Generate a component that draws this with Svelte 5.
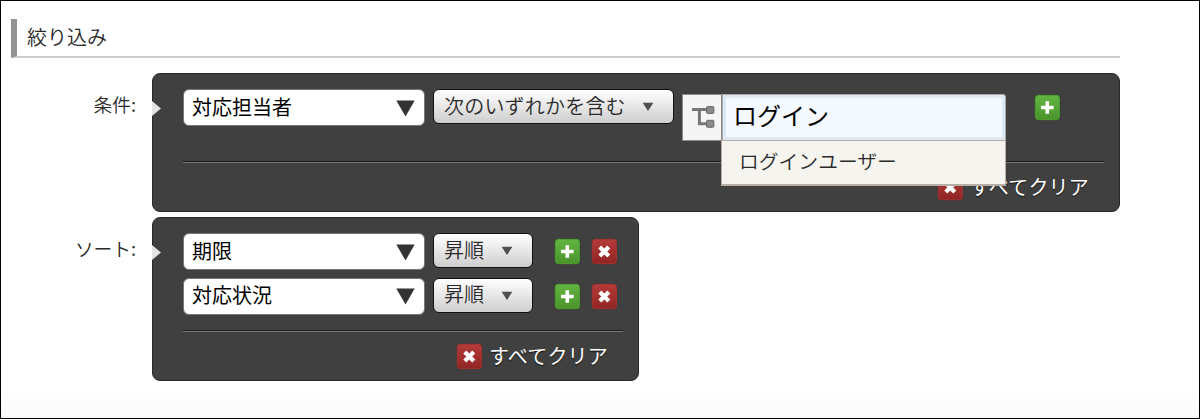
<script>
  const sorts = ['期限', '対応状況'];
</script>

{#snippet plus()}
  <svg class="icon" width="27" height="27" viewBox="0 0 27 27">
    <rect x=".5" y=".5" width="26" height="26" rx="4" fill="#383838" />
    <rect x="1.3" y="1.3" width="24.2" height="24.4" rx="3" fill="url(#green)" stroke="#4fa82f" stroke-width=".8" />
    <path d="M13.3 7.2v12.6M7 13.5h12.6" stroke="#fff" stroke-width="3.6" />
  </svg>
{/snippet}

{#snippet cross()}
  <svg class="icon" width="27" height="27" viewBox="0 0 27 27">
    <rect x=".5" y=".5" width="26" height="26" rx="4" fill="#383838" />
    <rect x="1.3" y="1.3" width="24.2" height="24.4" rx="3" fill="url(#red)" stroke="#b03431" stroke-width=".8" />
    <path d="M8.8 9l9 9M17.8 9l-9 9" stroke="#fff" stroke-width="4.2" />
  </svg>
{/snippet}

{#snippet field(text)}
  <div class="field">
    <span>{text}</span>
    <svg width="19" height="17" viewBox="0 0 19 17"><path d="M.3.6h18.4L9.5 16.4z" fill="#333" /></svg>
  </div>
{/snippet}

{#snippet operator(text, wide)}
  <div class="operator" class:wide>
    <span>{text}</span>
    <svg width="12" height="10" viewBox="0 0 12 10"><path d="M.6.8h10.8L6 9z" fill="#505050" /></svg>
  </div>
{/snippet}

{#snippet clear()}
  <div class="clear">{@render cross()}<span>すべてクリア</span></div>
{/snippet}

<svg class="defs" width="0" height="0">
  <linearGradient id="green" x2="0" y2="1"><stop stop-color="#62b440" /><stop offset="1" stop-color="#4b942d" /></linearGradient>
  <linearGradient id="red" x2="0" y2="1"><stop stop-color="#b53b38" /><stop offset="1" stop-color="#8f2523" /></linearGradient>
</svg>

<main>
  <h2>絞り込み</h2>

  <section>
    <div class="label">条件:</div>
    <div class="panel conditions">
      <div class="row">
        {@render field('対応担当者')}
        {@render operator('次のいずれかを含む', true)}
        <div class="picker">
          <div class="tree">
            <svg width="24" height="24" viewBox="0 0 24 24">
              <path d="M1 4.6h16M8.4 4.6v14.2h8" fill="none" stroke="#777" stroke-width="3" />
              <rect x="15.5" y="1.5" width="7.4" height="7" rx="1.2" fill="#8a8a8a" stroke="#686868" />
              <rect x="15.5" y="15.3" width="7.4" height="7" rx="1.2" fill="#8a8a8a" stroke="#686868" />
            </svg>
          </div>
          <div class="input">ログイン</div>
          <div class="menu">ログインユーザー</div>
        </div>
        <div class="add">{@render plus()}</div>
      </div>
      <hr />
      {@render clear()}
    </div>
  </section>

  <section>
    <div class="label">ソート:</div>
    <div class="panel sorting">
      {#each sorts as name}
        <div class="row">
          {@render field(name)}
          {@render operator('昇順', false)}
          <div class="actions">{@render plus()}{@render cross()}</div>
        </div>
      {/each}
      <hr />
      {@render clear()}
    </div>
  </section>
</main>

<style>
  :global(body) { margin: 0; }
  * { box-sizing: border-box; }
  svg { display: block; flex: none; }
  .defs { position: absolute; }
  main {
    width: 1200px;
    height: 419px;
    padding: 18px 79px 0 10px;
    border: 1px solid #000;
    background: linear-gradient(#fff 390px, #fafafa);
    font: 20px/28px "Noto Sans CJK JP", sans-serif;
    color: #2a2a2a;
    overflow: hidden;
    white-space: nowrap;
  }
  h2 {
    height: 39px;
    width: 1109px;
    margin: 0 0 15px;
    padding: 4px 0 0 10px;
    border-left: 6px solid #949494;
    border-bottom: 2px solid #d0cbc8;
    font-size: 20px;
    font-weight: 350;
    line-height: 28px;
  }
  section { display: flex; margin-bottom: 5px; }
  .label {
    width: 141px;
    padding: 17px 16px 0 0;
    text-align: right;
    font-weight: 350;
    font-size: 18.7px;
  }
  .panel {
    position: relative;
    border: 1px solid #292929;
    border-radius: 8px;
    background: #404040;
    padding: 15px 15px 0 30px;
  }
  .panel::before {
    content: "";
    position: absolute;
    left: -1px;
    top: 27px;
    width: 9px;
    height: 15px;
    background: #e4e4e4;
    clip-path: polygon(0 0, 100% 50%, 0 100%);
  }
  .conditions { width: 968px; height: 139px; }
  .sorting { width: 487px; height: 164px; }
  .row { display: flex; align-items: flex-start; height: 44.5px; }
  .field {
    display: flex;
    align-items: center;
    justify-content: space-between;
    width: 242px;
    height: 37px;
    padding: 0 9px 2px 8px;
    border: 1px solid #777;
    border-radius: 6px;
    background: #fff;
    color: #000;
  }
  .field svg { margin-top: 3px; }
  .operator {
    display: flex;
    align-items: center;
    justify-content: space-between;
    width: 100px;
    height: 35px;
    margin-left: 8px;
    padding: 0 19px 2px 10px;
    border: 1.5px solid #111;
    border-radius: 6px;
    background: linear-gradient(#fff, #cecece);
    font-size: 20px;
    font-weight: 350;
  }
  .operator svg { margin-top: 3px; }
  .wide { width: 241px; }
  .wide span { letter-spacing: .2px; }
  .picker { position: relative; display: flex; margin: 5px 0 0 8px; }
  .tree {
    width: 40px;
    height: 47px;
    padding: 10px 0 0 8px;
    border: 1px solid #8a8a8a;
    background: #f5f5f5;
  }
  .input {
    width: 284px;
    height: 47px;
    padding: 2px 10px 0;
    border: 1px solid #aaa;
    border-radius: 0 3px 0 0;
    background: #f4f9ff;
    box-shadow: inset 0 0 0 3px #dfe9f3;
    color: #000;
    font-size: 24px;
    line-height: 36px;
  }
  .menu {
    position: absolute;
    z-index: 1;
    left: 39px;
    top: 46px;
    width: 285px;
    height: 46px;
    padding: 4px 17px;
    border: 1px solid #b5afa7;
    border-bottom-width: 2px;
    background: #f5f4ef;
    font-size: 19.8px;
    font-weight: 350;
    line-height: 31px;
  }
  .add { margin: 5px 0 0 28px; }
  .actions { display: flex; gap: 10px; margin: 5px 0 0 21px; }
  hr {
    height: 2px;
    margin: 0;
    border: 0;
    border-top: 1px solid #1d1d1d;
    border-bottom: 1px solid #777;
  }
  .conditions hr { margin-top: 27.5px; }
  .sorting hr { margin-top: 8px; }
  .clear {
    display: flex;
    align-items: center;
    justify-content: flex-end;
    gap: 6px;
    margin-top: 11px;
    padding-right: 15px;
    color: #fff;
    text-shadow: 0 1px 1px #111;
  }
  .clear span { margin-top: -2px; letter-spacing: .2px; }
</style>
